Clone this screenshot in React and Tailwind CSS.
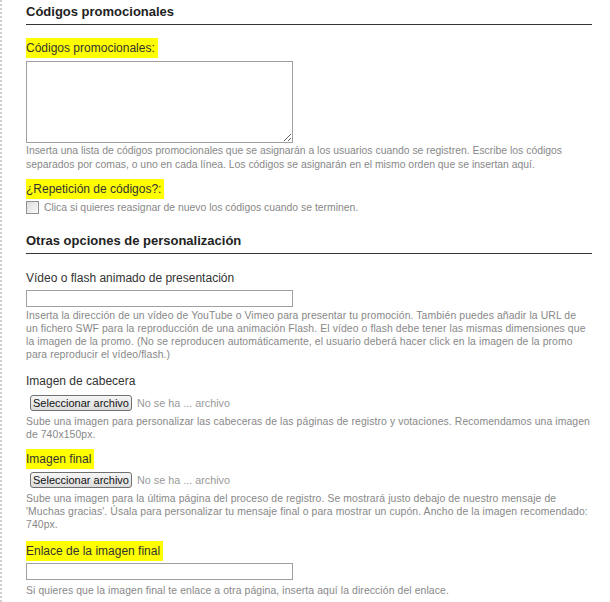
import React from 'react';

// Section title with a dark rule under it
function SectionTitle({ children, className = '' }) {
  return (
    <h2 className={`border-b border-[#333] pb-[3px] text-[13px] font-bold leading-[18px] text-[#222] ${className}`}>
      {children}
    </h2>
  );
}

function Label({ children, marked, className = '' }) {
  return (
    <div className={`text-[12px] leading-[20px] text-[#333] ${className}`}>
      <span className={marked ? 'bg-[#ffff00] py-[3px] pr-[3px]' : ''}>{children}</span>
    </div>
  );
}

function Help({ children, className = '' }) {
  return (
    <p className={`whitespace-nowrap text-[10.4px] leading-[13px] tracking-[0.1px] text-[#888] ${className}`}>
      {children}
    </p>
  );
}

function FilePicker({ className = '' }) {
  return (
    <div className={`flex items-center gap-[5px] pl-[4px] ${className}`}>
      <button className="h-[16px] w-[102px] whitespace-nowrap rounded-[3px] border border-[#707070] bg-gradient-to-b from-[#f6f6f6] to-[#dcdcdc] p-0 text-[11px] leading-[14px] text-[#111]">
        Seleccionar archivo
      </button>
      <span className="text-[10.8px] leading-[14px] text-[#999]">No se ha ... archivo</span>
    </div>
  );
}

export default function App() {
  return (
    <div
      className="min-h-[602px] w-[610px] border-l-2 border-dotted border-[#d0d0d0] bg-white pl-[24px] pr-[18px]"
      style={{ fontFamily: '"Liberation Sans", Arial, sans-serif' }}
    >
      <SectionTitle className="pt-[3px]">Códigos promocionales</SectionTitle>

      <Label marked className="mt-[13px]">Códigos promocionales:</Label>
      <textarea className="mt-[3px] block h-[82px] w-[267px] resize border border-[#a0a0a0] bg-white" />
      <Help className="mt-[1px] leading-[14px] tracking-normal">
        Inserta una lista de códigos promocionales que se asignarán a los usuarios cuando se registren. Escribe los códigos
        <br />
        separados por comas, o uno en cada línea. Los códigos se asignarán en el mismo orden que se insertan aquí.
      </Help>

      <Label marked className="mt-[7px]">¿Repetición de códigos?:</Label>
      <div className="mt-[2px] flex items-center gap-[5px]">
        <span className="block h-[13px] w-[13px] border border-[#8f8f8f] bg-gradient-to-br from-[#dcdcdc] to-[#fbfbfb]" />
        <span className="text-[10.4px] leading-[13px] text-[#888]">
          Clica si quieres reasignar de nuevo los códigos cuando se terminen.
        </span>
      </div>

      <SectionTitle className="mt-[18px]">Otras opciones de personalización</SectionTitle>

      <Label className="mt-[14px]">Vídeo o flash animado de presentación</Label>
      <input type="text" className="mt-[2px] block h-[17px] w-[267px] border border-[#a0a0a0] bg-white" />
      <Help className="mt-[2px]">
        Inserta la dirección de un vídeo de YouTube o Vimeo para presentar tu promoción. También puedes añadir la URL de
        <br />
        un fichero SWF para la reproducción de una animación Flash. El vídeo o flash debe tener las mismas dimensiones que
        <br />
        la imagen de la promo. (No se reproducen automáticamente, el usuario deberá hacer click en la imagen de la promo
        <br />
        para reproducir el vídeo/flash.)
      </Help>

      <Label className="mt-[10px]">Imagen de cabecera</Label>
      <FilePicker className="mt-[4px]" />
      <Help className="mt-[4px]">
        Sube una imagen para personalizar las cabeceras de las páginas de registro y votaciones. Recomendamos una imagen
        <br />
        de 740x150px.
      </Help>

      <Label marked className="mt-[8px]">Imagen final</Label>
      <FilePicker className="mt-[3px]" />
      <Help className="mt-[4px]">
        Sube una imagen para la última página del proceso de registro. Se mostrará justo debajo de nuestro mensaje de
        <br />
        'Muchas gracias'. Úsala para personalizar tu mensaje final o para mostrar un cupón. Ancho de la imagen recomendado:
        <br />
        740px.
      </Help>

      <Label marked className="mt-[10px]">Enlace de la imagen final</Label>
      <input type="text" className="mt-[2px] block h-[17px] w-[267px] border border-[#a0a0a0] bg-white" />
      <Help className="mt-[4px]">
        Si quieres que la imagen final te enlace a otra página, inserta aquí la dirección del enlace.
      </Help>
    </div>
  );
}
